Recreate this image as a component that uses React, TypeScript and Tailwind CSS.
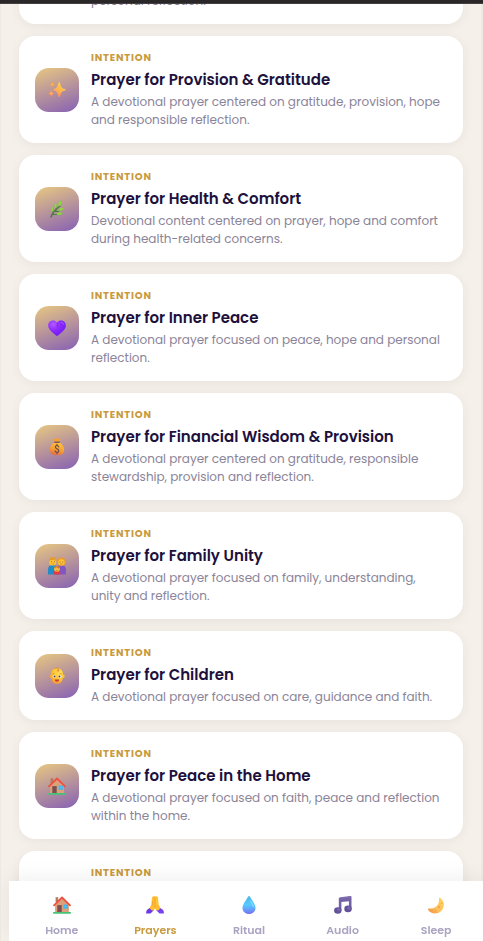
import type { ReactNode } from 'react';

type IconProps = { className?: string };

const SparklesIcon = ({ className }: IconProps) => (
  <svg viewBox="0 0 18 18" className={className} aria-hidden="true">
    <defs>
      <linearGradient id="sparkle" x1="0.8" y1="0" x2="0.2" y2="1">
        <stop offset="0" stopColor="#ffd34a" />
        <stop offset="0.55" stopColor="#ffb554" />
        <stop offset="1" stopColor="#ff7a5c" />
      </linearGradient>
    </defs>
    <g fill="url(#sparkle)">
      <path d="M11.2 1.200c.5 0 .8.500 1 1.200.8 3.700 1.300 4.500 4.800 5.500 1.300.4 1.300 1.300 0 1.700-3.500 1-4 1.800-4.800 5.700-.2 1-1.700 1-2 0C9.400 11.400 8.900 10.600 5.500 9.600c-1.300-.4-1.300-1.300 0-1.700 3.400-1 3.900-1.800 4.700-5.500.2-.7.500-1.200 1-1.200z" />
      <path d="M4.300 1.300c.4 1.500.7 1.900 2.200 2.300-1.500.4-1.800.8-2.200 2.300-.4-1.500-.7-1.900-2.200-2.300 1.500-.4 1.800-.8 2.200-2.300z" stroke="#ffa04f" strokeWidth=".5" />
      <path d="M3.200 9.500c.4 2 .9 2.500 2.800 3-1.900.5-2.400 1-2.800 3-.4-2-.9-2.500-2.800-3 1.900-.5 2.400-1 2.800-3z" stroke="#ff8a5c" strokeWidth=".6" />
    </g>
  </svg>
);

const HerbIcon = ({ className }: IconProps) => (
  <svg viewBox="0 0 18 18" className={className} aria-hidden="true">
    <path d="M3 17C4.500 12 8 9 12 6" fill="none" stroke="#4f7842" strokeWidth="1.500" strokeLinecap="round" />
    <path d="M5 14.500h4M7 11.500h4M5 14V9M8 11V6" fill="none" stroke="#4f7842" strokeWidth="1" />
    <g fill="#8fdc3c" stroke="#5fae38" strokeWidth=".2">
      <path d="M11 6.300C9.800 4 10.500 1.500 13.200.5c1.200 2.500.1 4.700-2.200 5.800z" />
      <path d="M7.900 8.500C6.200 7 6 4.700 7.300 2.800c1.800 1.700 2.100 3.900.6 5.700z" />
      <path d="M4.900 12C3.300 10.500 2.800 8.500 3.500 6.500c2.100 1.400 2.700 3.500 1.400 5.500z" />
      <path d="M10.200 10.300c1.200-2.200 3.300-3 5.900-2.300-1 2.300-3.200 3.200-5.900 2.300z" />
      <path d="M8.300 14.100c1.500-1.900 3.700-2.400 6.500-1.100-1.400 2.100-3.900 2.600-6.500 1.100z" />
    </g>
  </svg>
);

const HeartIcon = ({ className }: IconProps) => (
  <svg viewBox="0 0 18 18" className={className} aria-hidden="true">
    <defs>
      <radialGradient id="heart" cx="0.3" cy="0.25" r="0.75">
        <stop offset="0" stopColor="#b25cff" />
        <stop offset="0.5" stopColor="#8d2aff" />
        <stop offset="1" stopColor="#711cf2" />
      </radialGradient>
    </defs>
    <path d="M9 3.400C7.200.9 3.800.8 1.700 2.700-.4 4.800-.2 8 1.500 10.300c1.700 2.300 4.200 4.400 6.500 6.300.6.5 1.400.5 2 0 2.300-1.900 4.800-4 6.500-6.300C18.200 8 18.400 4.800 16.300 2.700 14.200.8 10.800.9 9 3.400z" fill="url(#heart)" />
    <path d="M9.400 3.800v4.500" stroke="#6b17df" strokeWidth=".6" />
    <path d="M13 3.500c1.400-.3 2.500.6 2.800 1.900" fill="none" stroke="#ad5cff" strokeWidth="1" strokeLinecap="round" />
  </svg>
);

const MoneyBagIcon = ({ className }: IconProps) => (
  <svg viewBox="0 0 18 18" className={className} aria-hidden="true">
    <defs>
      <linearGradient id="bag" x1="0.7" y1="0" x2="0.4" y2="1">
        <stop offset="0" stopColor="#ffc53d" />
        <stop offset="0.6" stopColor="#f49c34" />
        <stop offset="1" stopColor="#dd6f4c" />
      </linearGradient>
    </defs>
    <path d="M5.800.8c1-.7 1.500.2 2.500-.1 1-.5 1.700.2 2.600.1.800-.3 1.800-.3 1.500.7l-1.100 2.800H6.700L5.300 1.900c-.2-.5 0-.8.500-1.100z" fill="#f5a037" />
    <path d="M6.300 4.500h5.400c2.800 2 4.500 4.500 4.500 7.400 0 3.800-2.600 5.300-7.200 5.300s-7.200-1.500-7.200-5.300c0-2.900 1.700-5.400 4.500-7.400z" fill="url(#bag)" />
    <path d="M6.300 3.500h5.400v1.400H6.300z" fill="#765057" />
    <path d="M10.700 8.800c-.3-1-.9-1.300-1.700-1.300-1 0-1.700.6-1.700 1.500 0 2.200 3.500 1.500 3.500 3.700 0 1-.8 1.700-1.800 1.700s-1.700-.5-1.900-1.500M9 6.300v1.500M9 14v1.600" fill="none" stroke="#6e4a4e" strokeWidth="1.200" strokeLinecap="round" />
  </svg>
);

const FamilyIcon = ({ className }: IconProps) => (
  <svg viewBox="0 0 18 18" className={className} aria-hidden="true">
    <path d="M0 17.500v-5C0 9.700 1.500 8.200 4 8.200h2.500c2 0 3.300 1 3.300 3.300v6z" fill="#238bc7" />
    <path d="M8.500 17.500v-6c0-2.200 1.500-3.300 3.700-3.300h2c2.300 0 3.800 1.600 3.800 4.300v5z" fill="#8057c1" />
    <rect x="1.300" y=".5" width="7" height="8" rx="3" fill="#ffc431" />
    <path d="M1 4.300C.8 1.500 2.500 0 4.500.3c2-.7 4 .7 3.900 3.700-1-.3-1.500-.9-2-1.600-1.600.8-3.500.5-4.400.7L1.600 5z" fill="#e39a2e" />
    <path d="M9.300 5.500C9 2.300 10.700.4 13.500.5c3 0 4.500 2 4.200 5-.2 2-1.700 3.300-4.200 3.300s-4-1.300-4.200-3.300z" fill="#e89b2e" />
    <rect x="10.200" y="2.200" width="6.400" height="6.300" rx="3" fill="#ffc431" />
    <path d="M3.300 4.700h.7M6 4.700h.7M11.700 5h.7M14.500 5h.7" stroke="#6c4938" strokeWidth=".9" />
    <path d="M3.800 6.500c.8.700 1.700.7 2.400 0M12.200 6.700c.8.700 1.700.7 2.400 0" fill="none" stroke="#b55a35" strokeWidth=".6" />
    <path d="M5.700 17.500v-2c0-1.300 1-2 2.200-2h2.200c1.200 0 2.200.7 2.200 2v2z" fill="#e53a46" />
    <circle cx="9" cy="11.800" r="2.900" fill="#ffc13a" />
    <path d="M6.200 11.200c.1-3 5.500-3 5.700 0-1.800 0-2.900-.5-3.500-1-.5.600-1.300 1-2.200 1z" fill="#d56f35" />
    <path d="M7.700 12h.5M10 12h.5M8.300 13.400h1.400" stroke="#904e2e" strokeWidth=".6" />
  </svg>
);

const BabyIcon = ({ className }: IconProps) => (
  <svg viewBox="0 0 18 18" className={className} aria-hidden="true">
    <defs>
      <radialGradient id="baby" cx="0.65" cy="0.3" r="0.7">
        <stop offset="0" stopColor="#ffe052" />
        <stop offset="0.6" stopColor="#ffc331" />
        <stop offset="1" stopColor="#f49b36" />
      </radialGradient>
    </defs>
    <path d="M9 1c4 0 6 3 6 6.700 1.300 0 1.800.7 1.600 1.700-.1 1-.7 1.600-1.700 1.700C14.200 15 12.500 17 9 17s-5.200-2-5.900-5.900c-1-.1-1.600-.7-1.700-1.700C1.200 8.400 1.700 7.700 3 7.700 3 4 5 1 9 1z" fill="url(#baby)" />
    <path d="M6.800 1.400c3-1 4.500.4 4 1.800-.3.900-1.600 1-1.700.2M9.800 1.500c.8.900 1 2.300.2 3.400" fill="none" stroke="#d98130" strokeWidth=".7" strokeLinecap="round" />
    <path d="M4.500 7.200l1.700-.7M11.800 6.500l1.700.7" stroke="#ca7430" strokeWidth=".7" />
    <ellipse cx="6.200" cy="9.500" rx="1.500" ry="1.500" fill="#fff" />
    <ellipse cx="11.800" cy="9.500" rx="1.500" ry="1.500" fill="#fff" />
    <circle cx="6.500" cy="9.500" r="1" fill="#513b4a" />
    <circle cx="11.500" cy="9.500" r="1" fill="#513b4a" />
    <path d="M6.800 12.500h4.400c-.3 1.600-1 2.200-2.200 2.200s-1.900-.6-2.200-2.200z" fill="#b83a34" />
    <path d="M7.700 14.100c.8-.6 1.800-.6 2.600 0-.7.800-1.900.8-2.600 0z" fill="#ed5269" />
  </svg>
);

const HouseIcon = ({ className }: IconProps) => (
  <svg viewBox="0 0 18 18" className={className} aria-hidden="true">
    <path d="M2.600 1.200h2.600v5H2.600z" fill="#b57b61" />
    <path d="M9 2.500l6.900 6.200V16.500H2.100V8.700z" fill="#dca17b" />
    <path d="M4.200 9h4.600v7.400H4.200z" fill="#8b5c57" />
    <path d="M4.900 9.700h3.200v6.700H4.900z" fill="#79504f" />
    <path d="M10.500 8.600h4.400v4.100h-4.400z" fill="#39b5ef" />
    <path d="M12.700 8.600v4.100M10.500 10.600h4.400" stroke="#75ccf0" strokeWidth=".4" />
    <path d="M1 9.300l8-7.800 8 7.800" fill="none" stroke="#ee5140" strokeWidth="1.800" strokeLinecap="round" strokeLinejoin="round" />
    <rect x="0" y="16" width="18" height="1.800" rx=".7" fill="#45c478" />
  </svg>
);

const PrayIcon = ({ className }: IconProps) => (
  <svg viewBox="0 0 18 18" className={className} aria-hidden="true">
    <path d="M4.700 11.400c1.500.3 2.800 1.500 3.100 2.900l-3.300 3.100H.2c-.2-1.800.3-3.200 1.600-4.100z" fill="#6d38e6" />
    <path d="M13.300 11.400c-1.500.3-2.800 1.500-3.100 2.900l3.300 3.100h4.300c.2-1.800-.3-3.200-1.600-4.100z" fill="#7642ee" />
    <path d="M7.200.5c1-.8 1.700-.2 1.800.4.100-.6 1.100-1.100 1.800-.3.900.1 1.200.8 1.300 1.800l.6 6.300 1.600 2.700c-.4 1.800-1.800 3.100-3.700 3.200L9 12.500l-1.600 2.100c-1.900-.1-3.300-1.400-3.700-3.200l1.600-2.700.6-6.300c.1-1 .4-1.800 1.300-1.900z" fill="#ffbf30" />
    <path d="M9 1v11M6.700 5l-.3 4.500" fill="none" stroke="#ed9833" strokeWidth=".7" />
    <path d="M10.900 2v7" stroke="#ffd55a" strokeWidth=".6" />
  </svg>
);

const DropIcon = ({ className }: IconProps) => (
  <svg viewBox="0 0 18 18" className={className} aria-hidden="true">
    <defs>
      <linearGradient id="drop" x1="0.5" y1="0" x2="0.5" y2="1">
        <stop offset="0" stopColor="#4cb8e8" />
        <stop offset="0.5" stopColor="#55cbff" />
        <stop offset="1" stopColor="#7770f4" />
      </linearGradient>
    </defs>
    <path d="M9 0c.5 0 .8.400 1 .8 2.400 4.300 5.500 7.500 5.500 11.200 0 3.600-2.800 6-6.500 6s-6.500-2.400-6.500-6C2.500 8.300 5.600 5.100 8 .8c.2-.4.5-.8 1-.8z" fill="url(#drop)" />
    <path d="M10.500 5c1.500 2.300 2.600 4 2.800 5.500" fill="none" stroke="#83dcff" strokeWidth="1.300" strokeLinecap="round" />
  </svg>
);

const MusicIcon = ({ className }: IconProps) => (
  <svg viewBox="0 0 18 18" className={className} aria-hidden="true">
    <path d="M4.800 2.800c0-1 .6-1.500 1.700-1.600l9.800-1.100c.8-.1 1.200.3 1.200 1v12.400h-2.600V5.200L7.400 6.100v9H4.800z" fill="#7463a6" />
    <path d="M6.300 2.300l10.300-1.200" stroke="#8d79bd" strokeWidth=".6" />
    <ellipse cx="3.800" cy="14.500" rx="3.700" ry="3.300" fill="#63519a" />
    <ellipse cx="14" cy="12.900" rx="3.700" ry="3.300" fill="#63519a" />
    <circle cx="4.700" cy="13.700" r="1.600" fill="#7a66aa" />
    <circle cx="14.900" cy="12.100" r="1.600" fill="#7a66aa" />
  </svg>
);

const MoonIcon = ({ className }: IconProps) => (
  <svg viewBox="0 0 18 18" className={className} aria-hidden="true">
    <defs>
      <linearGradient id="moon" x1="1" y1="0" x2="0" y2="0.9">
        <stop offset="0" stopColor="#ffd45c" />
        <stop offset="0.6" stopColor="#ffc05e" />
        <stop offset="1" stopColor="#f1923f" />
      </linearGradient>
    </defs>
    <path d="M13 1.700c3.500 2.300 4.900 6.900 3 10.700-2.500 5.200-9.200 6.700-13.500 3.100-.7-.6-1.200-1.200-1.500-1.900-.3-.7.200-1.200.9-1.100 5.900.6 10.600-3.100 10.100-9.800 0-.8.300-1.300 1-1z" fill="url(#moon)" />
    <g fill="#efa04b">
      <circle cx="12" cy="11" r="1" />
      <circle cx="14.800" cy="7.400" r=".7" />
      <circle cx="8.500" cy="14.800" r=".8" />
      <circle cx="5" cy="14.300" r=".6" />
    </g>
  </svg>
);

const prayers = [
  {
    title: 'Prayer for Provision & Gratitude',
    text: 'A devotional prayer centered on gratitude, provision, hope and responsible reflection.',
    Icon: SparklesIcon,
  },
  {
    title: 'Prayer for Health & Comfort',
    text: 'Devotional content centered on prayer, hope and comfort during health-related concerns.',
    Icon: HerbIcon,
  },
  {
    title: 'Prayer for Inner Peace',
    text: 'A devotional prayer focused on peace, hope and personal reflection.',
    Icon: HeartIcon,
  },
  {
    title: 'Prayer for Financial Wisdom & Provision',
    text: 'A devotional prayer centered on gratitude, responsible stewardship, provision and reflection.',
    Icon: MoneyBagIcon,
  },
  {
    title: 'Prayer for Family Unity',
    text: 'A devotional prayer focused on family, understanding, unity and reflection.',
    Icon: FamilyIcon,
  },
  {
    title: 'Prayer for Children',
    text: 'A devotional prayer focused on care, guidance and faith.',
    Icon: BabyIcon,
  },
  {
    title: 'Prayer for Peace in the Home',
    text: 'A devotional prayer focused on faith, peace and reflection within the home.',
    Icon: HouseIcon,
  },
];

const tabs = [
  { label: 'Home', Icon: HouseIcon },
  { label: 'Prayers', Icon: PrayIcon },
  { label: 'Ritual', Icon: DropIcon },
  { label: 'Audio', Icon: MusicIcon },
  { label: 'Sleep', Icon: MoonIcon },
];

const Card = ({ children }: { children: ReactNode }) => (
  <a
    href="#"
    className="flex shrink-0 items-center gap-3 rounded-2xl bg-white px-4 py-3.5 shadow-[0_2px_12px_rgba(42,20,70,0.06)]"
  >
    {children}
  </a>
);

const Tag = () => (
  <span className="mb-1 block text-[10px] font-bold leading-[15px] tracking-[0.08em] text-[#c99a3e]">INTENTION</span>
);

const PrayerList = () => (
  <section className="-mt-[22px] flex flex-col gap-3 px-[18px]">
    <Card>
      <p className="ml-14 text-xs leading-[18px] text-[#8a8499]">personal reflection.</p>
    </Card>
    {prayers.map(({ title, text, Icon }) => (
      <Card key={title}>
        <span className="flex size-11 shrink-0 items-center justify-center rounded-[14px] bg-[linear-gradient(160deg,#e8c882,#8660b4)]">
          <Icon className="size-[18px]" />
        </span>
        <span className="min-w-0 flex-1">
          <Tag />
          <span className="mb-0.5 block text-[15px] font-semibold leading-[22px] text-[#20103c]">{title}</span>
          <span className="block text-xs leading-[18px] text-[#8a8499]">{text}</span>
        </span>
      </Card>
    ))}
    <Card>
      <span className="ml-14 h-20">
        <Tag />
      </span>
    </Card>
  </section>
);

const BottomNav = () => (
  <nav className="fixed bottom-0 left-[9px] right-0 flex bg-white pb-0.5 pl-1.5 pt-[15px] shadow-[0_-4px_20px_rgba(0,0,0,0.06)]">
    {tabs.map(({ label, Icon }) => (
      <button
        key={label}
        className={`flex flex-1 cursor-pointer flex-col items-center gap-[7px] text-[11px] font-semibold leading-[18px] ${label === 'Prayers' ? 'text-[#c99a3e]' : 'text-[#aaa3c1]'}`}
      >
        <Icon className="size-[18px]" />
        {label}
      </button>
    ))}
  </nav>
);

export default function App() {
  return (
    <main className="h-screen overflow-hidden bg-[#eee9e2] pl-px font-['Poppins','Inter',sans-serif]">
      <div className="flex h-full max-w-[480px] flex-col overflow-hidden bg-[#f5f0e9]">
        <PrayerList />
      </div>
      <div className="fixed inset-x-0 top-0 h-1 border-b border-[#45403f] bg-[#292728]" />
      <BottomNav />
    </main>
  );
}
